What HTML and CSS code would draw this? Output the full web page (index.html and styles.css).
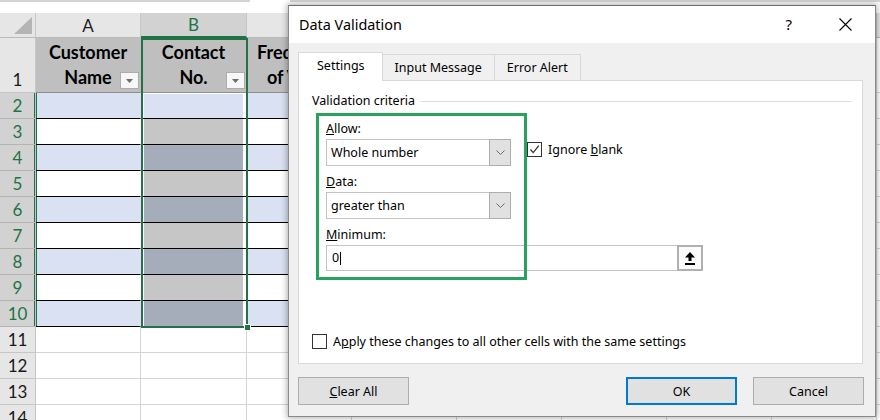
FILE: index.html
```html
<!DOCTYPE html>
<html lang="en">
<head>
<meta charset="utf-8">
<title>Data Validation</title>
<link rel="stylesheet" href="styles.css">
</head>
<body>
<div class="screen">
  <div class="formula-edge"></div>
  <div class="sheet">
    <div class="row colheads">
      <div class="corner"><svg class="corner-tri" width="18" height="17" viewBox="0 0 18 17"><polygon points="18,0 18,17 0,17" fill="#b4b4b4"/></svg></div>
      <div class="ch">A</div>
      <div class="ch b sel">B</div>
      <div class="ch">C</div>
      <div class="ch-rest"></div>
    </div>
    <div class="row r1">
      <div class="rh">1</div>
      <div class="c th">Customer<br>Name<span class="filter"><svg width="7" height="4" viewBox="0 0 7 4"><polygon points="0,0 7,0 3.5,4" fill="#6d6d6d"/></svg></span></div>
      <div class="c b th">Contact<br>No.<span class="filter"><svg width="7" height="4" viewBox="0 0 7 4"><polygon points="0,0 7,0 3.5,4" fill="#6d6d6d"/></svg></span></div>
      <div class="c th">Frequency<br>of Visits</div>
      <div class="rest head-rest"></div>
    </div>
    <div class="row tr band active-row"><div class="rh">2</div><div class="c a"></div><div class="c b"></div><div class="c cc"></div><div class="rest"></div></div>
    <div class="row tr plain"><div class="rh">3</div><div class="c a"></div><div class="c b"></div><div class="c cc"></div><div class="rest"></div></div>
    <div class="row tr band"><div class="rh">4</div><div class="c a"></div><div class="c b"></div><div class="c cc"></div><div class="rest"></div></div>
    <div class="row tr plain"><div class="rh">5</div><div class="c a"></div><div class="c b"></div><div class="c cc"></div><div class="rest"></div></div>
    <div class="row tr band"><div class="rh">6</div><div class="c a"></div><div class="c b"></div><div class="c cc"></div><div class="rest"></div></div>
    <div class="row tr plain"><div class="rh">7</div><div class="c a"></div><div class="c b"></div><div class="c cc"></div><div class="rest"></div></div>
    <div class="row tr band"><div class="rh">8</div><div class="c a"></div><div class="c b"></div><div class="c cc"></div><div class="rest"></div></div>
    <div class="row tr plain"><div class="rh">9</div><div class="c a"></div><div class="c b"></div><div class="c cc"></div><div class="rest"></div></div>
    <div class="row tr band"><div class="rh">10</div><div class="c a"></div><div class="c b"></div><div class="c cc"></div><div class="rest"></div></div>
    <div class="row"><div class="rh">11</div><div class="c"></div><div class="c b"></div><div class="c"></div><div class="rest"></div></div>
    <div class="row"><div class="rh">12</div><div class="c"></div><div class="c b"></div><div class="c"></div><div class="rest"></div></div>
    <div class="row"><div class="rh">13</div><div class="c"></div><div class="c b"></div><div class="c"></div><div class="rest"></div></div>
    <div class="row"><div class="rh">14</div><div class="c"></div><div class="c b"></div><div class="c"></div><div class="rest"></div></div>
    <div class="selection"><span class="fill-handle"></span></div>
  </div>

  <div class="dialog">
    <div class="titlebar">
      <span class="title">Data Validation</span>
      <span class="help">?</span>
      <svg class="close" width="13" height="13" viewBox="0 0 13 13"><path d="M0.5 0.5 L12.5 12.5 M12.5 0.5 L0.5 12.5" stroke="#000" stroke-width="1.1" fill="none"/></svg>
    </div>
    <div class="dbody">
      <div class="tabs">
        <div class="tab active">Settings</div>
        <div class="tab">Input Message</div>
        <div class="tab">Error Alert</div>
      </div>
      <div class="panel">
        <div class="group-head"><span>Validation criteria</span><span class="rule"></span></div>
        <div class="form">
          <div class="lbl"><u>A</u>llow:</div>
          <div class="line">
            <div class="select"><span class="val">Whole number</span><span class="arrow"><svg width="9" height="5" viewBox="0 0 9 5"><path d="M0.5 0.5 L4.5 4.5 L8.5 0.5" stroke="#6b6b6b" stroke-width="1" fill="none"/></svg></span></div>
            <div class="check ignore"><span class="box"><svg width="11" height="11" viewBox="0 0 11 11"><path d="M1.5 5.5 L4.2 8.6 L9.8 1.6" stroke="#333" stroke-width="1.3" fill="none"/></svg></span><span>Ignore <u>b</u>lank</span></div>
          </div>
          <div class="lbl"><u>D</u>ata:</div>
          <div class="select"><span class="val">greater than</span><span class="arrow"><svg width="9" height="5" viewBox="0 0 9 5"><path d="M0.5 0.5 L4.5 4.5 L8.5 0.5" stroke="#6b6b6b" stroke-width="1" fill="none"/></svg></span></div>
          <div class="lbl"><u>M</u>inimum:</div>
          <div class="line">
            <div class="input">0<span class="caret"></span></div>
            <div class="rangebtn"><svg width="10" height="13" viewBox="0 0 10 13"><polygon points="5,0 10,5.5 0,5.5" fill="#000"/><rect x="3.5" y="5" width="3" height="4" fill="#000"/><rect x="0" y="11" width="10" height="2" fill="#000"/></svg></div>
          </div>
        </div>
        <div class="check apply"><span class="box"></span><span>A<u>p</u>ply these changes to all other cells with the same settings</span></div>
      </div>
      <div class="buttons">
        <button class="btn"><u>C</u>lear All</button>
        <span class="grow"></span>
        <button class="btn ok">OK</button>
        <button class="btn">Cancel</button>
      </div>
    </div>
    <div class="highlight"></div>
  </div>
</div>
</body>
</html>
```

FILE: styles.css
```css
* { box-sizing: border-box; }
html, body { margin: 0; padding: 0; }
body {
  width: 880px;
  height: 420px;
  overflow: hidden;
  background: #fff;
  font-family: Lato, "Liberation Sans", sans-serif;
}
.screen { position: relative; width: 880px; height: 420px; overflow: hidden; }

.formula-edge {
  height: 13px;
  background: linear-gradient(to right, #d4d4d4 250px, #fff 250px, #fff 290px, #d4d4d4 290px) top left / 100% 2px no-repeat;
}

/* ---------- sheet ---------- */
.sheet { position: relative; }
.row { display: flex; height: 26px; }
.rh {
  flex: none;
  width: 36px;
  background: #e6e6e6;
  border-right: 1px solid #c6c6c6;
  border-bottom: 1px solid #c6c6c6;
  display: flex;
  align-items: flex-end;
  justify-content: center;
  font-size: 17px;
  line-height: 24px;
  color: #1a1a1a;
}
.c {
  flex: none;
  width: 105px;
  border-right: 1px solid #d4d4d4;
  border-bottom: 1px solid #d4d4d4;
}
.c.b { width: 106px; }
.rest {
  flex: none;
  width: 540px;
  border-bottom: 1px solid #d4d4d4;
  background: linear-gradient(to right, transparent 104px, #d4d4d4 104px) 0 0 / 105px 100% repeat-x;
}

.colheads { height: 25px; }
.corner {
  flex: none;
  width: 36px;
  background: #e6e6e6;
  border-right: 1px solid #c6c6c6;
  border-bottom: 1px solid #b9b9b9;
  display: flex;
  justify-content: flex-end;
  align-items: flex-end;
  padding: 0 3px 3px 0;
}
.ch {
  flex: none;
  width: 105px;
  background: #e6e6e6;
  border-right: 1px solid #c6c6c6;
  border-bottom: 1px solid #b9b9b9;
  text-align: center;
  font-size: 17px;
  line-height: 25px;
  color: #222;
}
.ch.b { width: 106px; }
.ch.sel { background: #d2d2d2; color: #217346; border-bottom: 2px solid #217346; line-height: 24px; }
.ch-rest {
  flex: none;
  width: 540px;
  background: #e6e6e6 linear-gradient(to right, transparent 104px, #c6c6c6 104px) 0 0 / 105px 100% repeat-x;
  border-bottom: 1px solid #b9b9b9;
}

.r1 { height: 55px; }
.r1 .rh { padding-bottom: 0; }
.th {
  position: relative;
  background: #bfbfbf;
  border-right-color: #bfbfbf;
  border-bottom: 1px solid #8e8e8e;
  display: flex;
  align-items: center;
  justify-content: center;
  text-align: center;
  font-weight: 700;
  font-size: 18px;
  line-height: 25px;
  color: #000;
  white-space: nowrap;
}
.head-rest { background-color: #fff; }
.filter {
  position: absolute;
  right: 1px;
  bottom: 3px;
  width: 19px;
  height: 17px;
  background: #f7f7f7;
  border: 1px solid #acacac;
  display: flex;
  align-items: center;
  justify-content: center;
}

.tr .rh {
  background: #d2d2d2;
  color: #217346;
  border-bottom-color: #b4b4b4;
  box-shadow: inset -1px 0 0 #217346;
  align-items: center;
  line-height: 26px;
}
.tr .c { border-bottom: 1px solid #000; }
.tr .a { border-right-color: transparent; box-shadow: inset 1px 0 0 #217346; }
.band .a, .band .cc { background: #d9e1f2; }
.plain .a, .plain .cc { background: #fff; }
.tr .b { border-right-color: transparent; box-shadow: inset 3px 0 0 #fff, inset -3px 0 0 #fff; }
.band .b { background: #a6adba; }
.plain .b { background: #c6c6c6; }
.active-row .b { background: #d9e1f2; box-shadow: inset 3px 0 0 #fff, inset -3px 0 0 #fff, inset 0 1px 0 #fff; }

.selection {
  position: absolute;
  left: 141px;
  top: 25px;
  width: 107px;
  height: 290px;
  border: 2px solid #217346;
}
.fill-handle {
  position: absolute;
  right: -5px;
  bottom: -5px;
  width: 7px;
  height: 7px;
  background: #217346;
  border: 1px solid #fff;
}

/* ---------- dialog ---------- */
.dialog {
  position: absolute;
  left: 288px;
  top: 5px;
  width: 588px;
  height: 412px;
  border: 1px solid #8a8a8a;
  border-top-color: #6e6e6e;
  background: #f0f0f0;
  box-shadow: 0 0 6px 1px rgba(0, 0, 0, 0.32);
  display: flex;
  flex-direction: column;
  font-family: "Noto Sans", "Open Sans", sans-serif;
  font-size: 12.5px;
  color: #000;
}
.titlebar {
  flex: none;
  height: 37px;
  background: #fff;
  display: flex;
  align-items: center;
  padding: 0 23px 0 10px;
}
.title { font-size: 14.4px; flex: 1; padding-bottom: 1px; }
.help { font-size: 15px; margin-right: 47px; padding-bottom: 1px; }
.close { display: block; }

.dbody {
  flex: 1;
  display: flex;
  flex-direction: column;
  padding: 9px 11px 11px 9px;
}
.tabs { display: flex; align-items: flex-end; height: 28px; }
.tab {
  height: 26px;
  padding: 4px 12px 0;
  background: #f0f0f0;
  border: 1px solid #d9d9d9;
  border-bottom: none;
  margin-left: -1px;
  white-space: nowrap;
}
.tab.active {
  height: 29px;
  margin: 0 0 -1px 0;
  padding: 4px 17px 0 18px;
  background: #fff;
  position: relative;
  z-index: 1;
}

.panel {
  height: 284px;
  margin-right: 1px;
  background: #fff;
  border: 1px solid #d9d9d9;
  display: flex;
  flex-direction: column;
  padding: 10px 11px 13px 13px;
}
.group-head { display: flex; align-items: center; height: 20px; line-height: 20px; }
.rule { flex: 1; height: 1px; background: #dcdcdc; margin-left: 6px; }

.form { padding: 8px 0 0 14px; display: flex; flex-direction: column; align-items: flex-start; }
.lbl { height: 20px; line-height: 20px; }
.line { display: flex; align-items: flex-start; }
.select {
  width: 185px;
  height: 27px;
  border: 1px solid #c4c4c4;
  background: #fff;
  display: flex;
  align-items: stretch;
  margin-bottom: 6px;
}
.select .val { flex: 1; padding-left: 4px; line-height: 25px; }
.select .arrow {
  width: 22px;
  margin: -1px -1px -1px 0;
  background: #e1e1e1;
  border: 1px solid #adadad;
  display: flex;
  align-items: center;
  justify-content: center;
}

.check { display: flex; align-items: center; white-space: nowrap; }
.check .box {
  width: 15px;
  height: 15px;
  border: 1px solid #333;
  background: #fff;
  display: flex;
  align-items: center;
  justify-content: center;
  margin-right: 6px;
  flex: none;
}
.ignore { margin: 1px 0 0 16px; height: 18px; }

.input {
  width: 351px;
  height: 26px;
  border: 1px solid #c4c4c4;
  border-right: none;
  background: #fff;
  padding-left: 5px;
  line-height: 24px;
  display: flex;
  align-items: center;
}
.caret { width: 1px; height: 13px; background: #000; margin-left: 1px; }
.rangebtn {
  width: 26px;
  height: 26px;
  border: 2px solid #b0b0b0;
  background: #fbfbfb;
  display: flex;
  align-items: center;
  justify-content: center;
}

.apply { margin-top: auto; }

.buttons { display: flex; margin-top: 13px; }
.grow { flex: 1; }
.btn {
  width: 111px;
  height: 28px;
  border: 1px solid #adadad;
  background: #e1e1e1;
  font-family: inherit;
  font-size: 12.5px;
  color: #000;
  padding: 0;
}
.btn.ok { border: 2px solid #0078d7; margin-right: 16px; }

.highlight {
  position: absolute;
  left: 27px;
  top: 107px;
  width: 211px;
  height: 167px;
  border: 3px solid #27a35e;
  pointer-events: none;
}
```
